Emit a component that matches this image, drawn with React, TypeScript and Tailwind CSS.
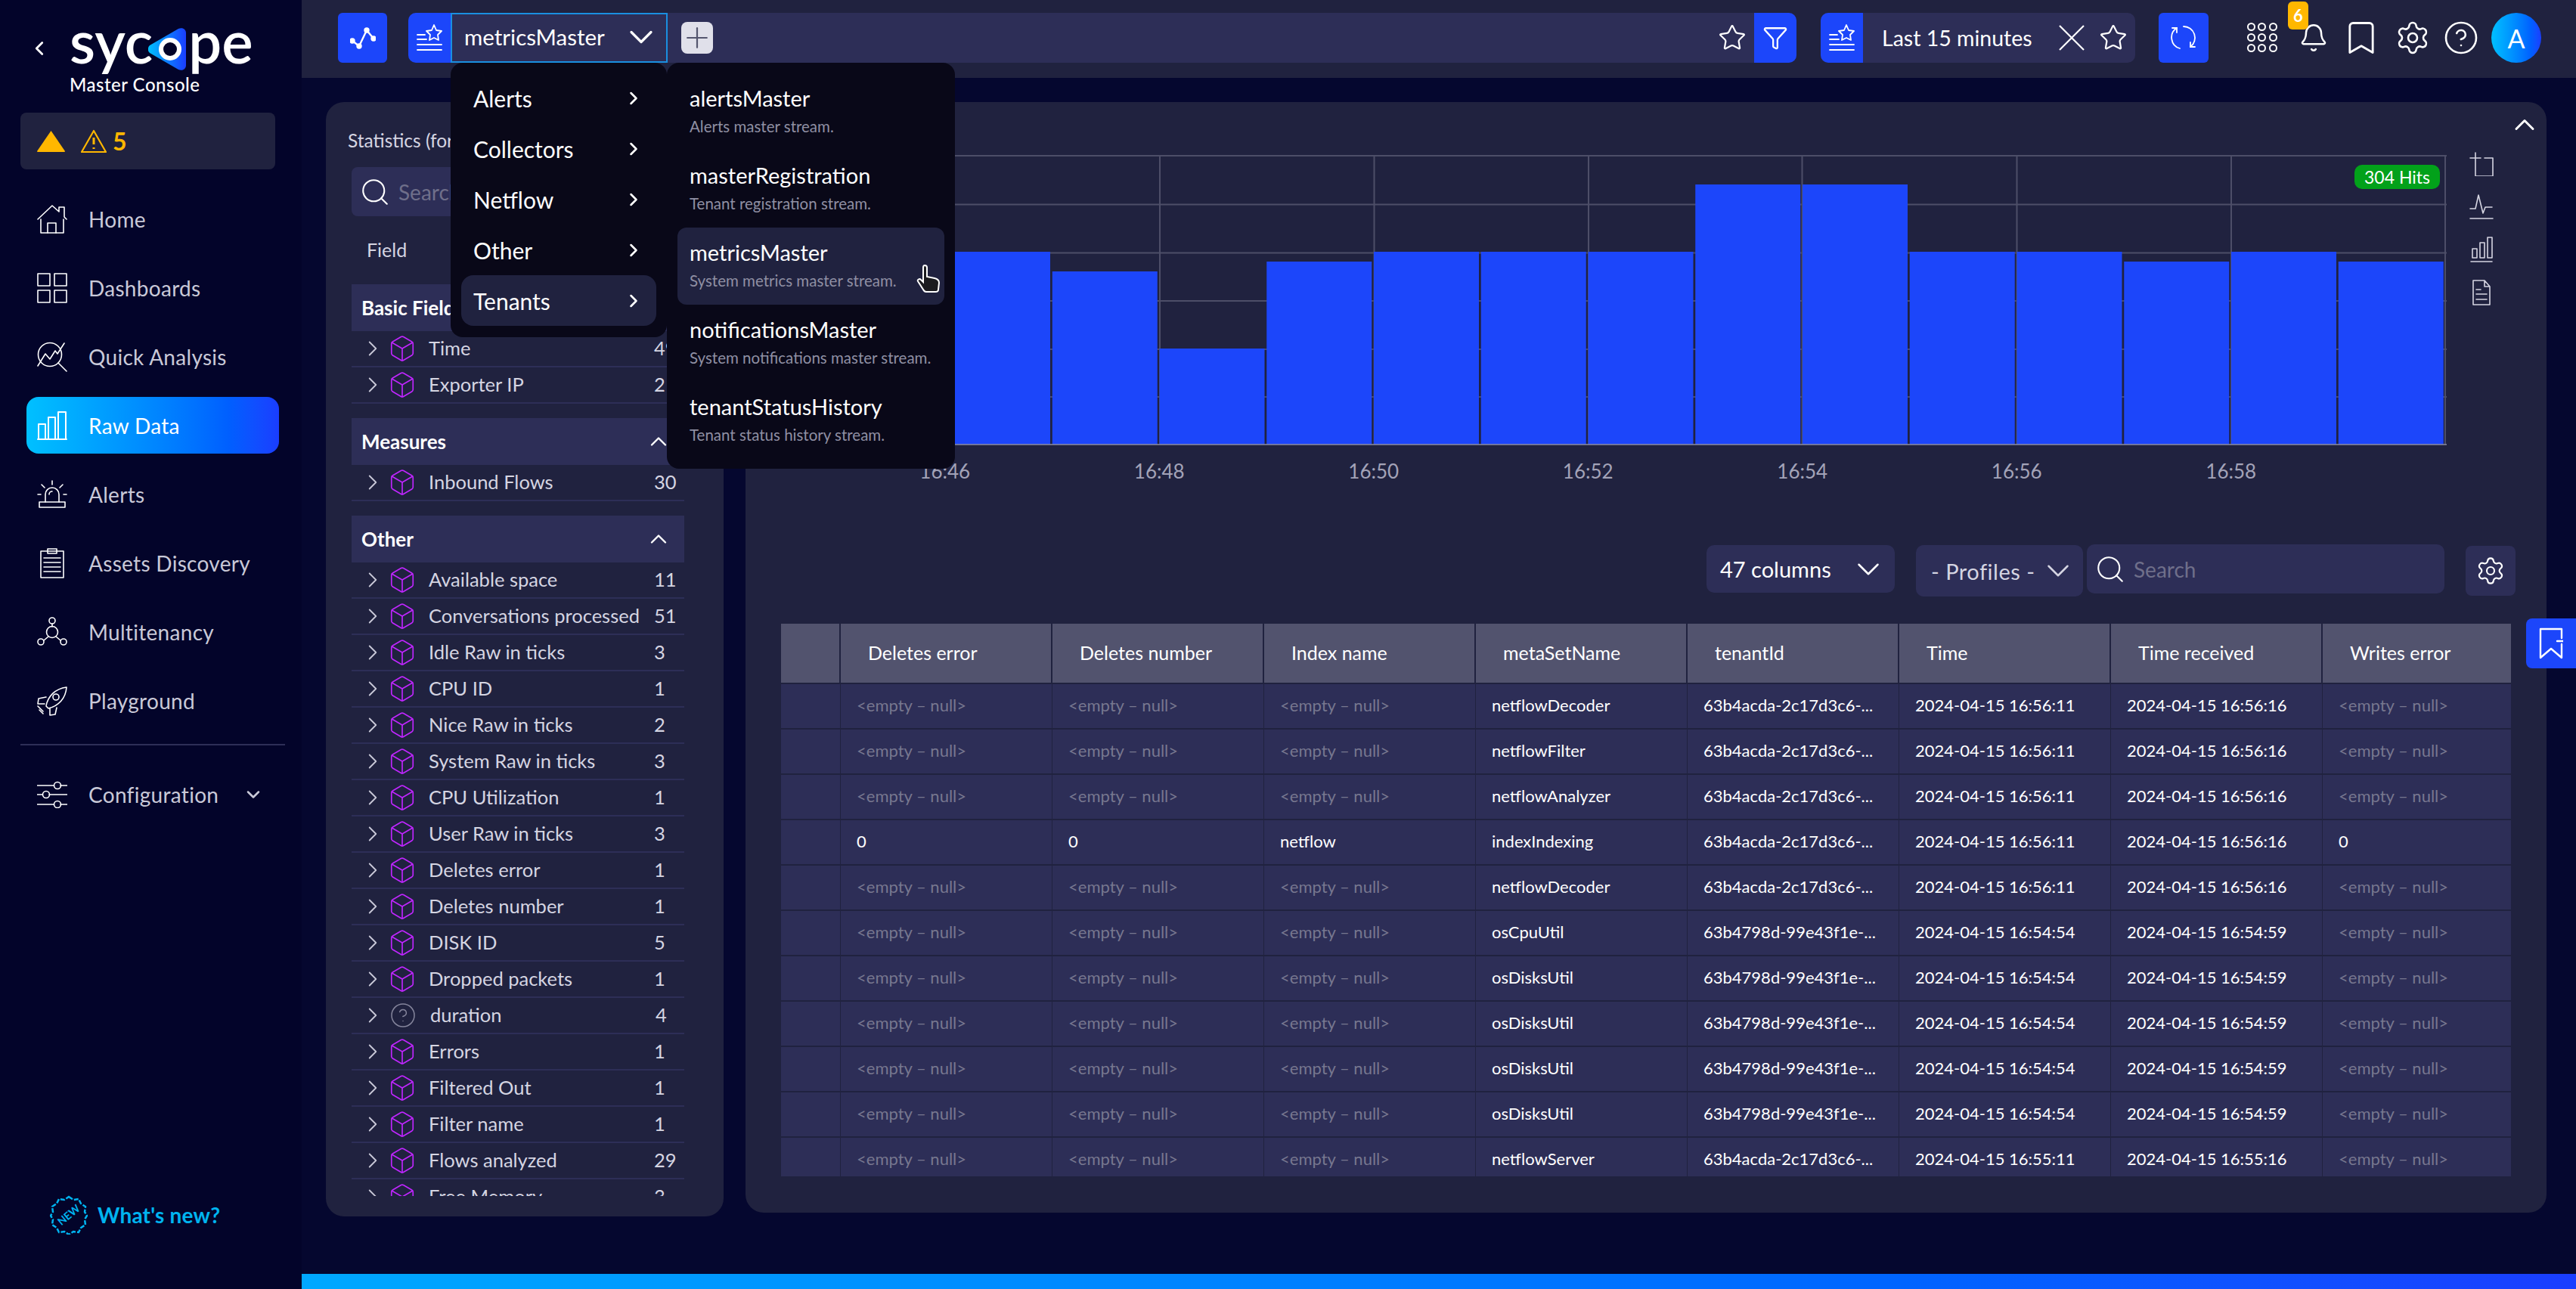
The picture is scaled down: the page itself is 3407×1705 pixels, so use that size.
import React from "react";
import { Box, ChevronRight, ChevronDown, ChevronUp, ChevronLeft, Search, Star, Filter, Plus, Bell, Bookmark, Settings, CircleHelp } from "lucide-react";

const S = { fill: "none", stroke: "currentColor", strokeWidth: 1.6, strokeLinecap: "round", strokeLinejoin: "round" } as const;

function HomeI() { return <svg width="40" height="40" viewBox="0 0 40 40" {...S}><path d="M1 20 20 2l9 8V4h7v13l3 3" /><path d="M5 20v18h30V20" /><path d="M14 38V25h11v13" /></svg>; }
function DashI() { return <svg width="40" height="40" viewBox="0 0 40 40" {...S}><rect x="1" y="1" width="16" height="16" /><rect x="23" y="1" width="16" height="16" /><rect x="1" y="23" width="16" height="16" /><rect x="23" y="23" width="16" height="16" /></svg>; }
function QuickI() { return <svg width="40" height="40" viewBox="0 0 40 40" {...S}><circle cx="17" cy="17" r="15.5" /><path d="m28 28 11 11" /><path d="M1 32 11 16l6 7 7-11 3 4L36 2" /></svg>; }
function BarsI() { return <svg width="40" height="40" viewBox="0 0 40 40" {...S} strokeWidth={2}><path d="M1 38h38" /><rect x="2" y="18" width="9" height="20" /><rect x="15" y="9" width="9" height="29" /><rect x="28" y="2" width="10" height="36" /></svg>; }
function SirenI() { return <svg width="40" height="40" viewBox="0 0 40 40" {...S}><path d="M11 30V20a9 9 0 0 1 18 0v10" /><path d="M16 20a4 4 0 0 1 4-4" /><path d="M3 30h34v7H3z" /><path d="M20 2v5M6 7l4 4M34 7l-4 4M1 20h4M35 20h4" /></svg>; }
function ClipI() { return <svg width="32" height="40" viewBox="0 0 32 40" {...S}><rect x="1" y="4" width="30" height="35" /><rect x="10" y="1" width="12" height="6" /><path d="M5 13h22M5 19h22M5 25h22M5 31h22" /></svg>; }
function MultiI() { return <svg width="40" height="40" viewBox="0 0 40 40" {...S}><circle cx="20" cy="20" r="7.5" /><circle cx="20" cy="5" r="4" /><circle cx="5" cy="33" r="4" /><circle cx="35" cy="33" r="4" /><path d="M20 9v4M9 31l6-5M31 31l-6-5" /></svg>; }
function RocketI() { return <svg width="40" height="40" viewBox="0 0 40 40" {...S}><path d="M12 27C14 14 24 4 39 2c-1 15-11 25-24 28z" /><circle cx="25" cy="15" r="4" /><path d="M12 15 2 17l-1 7 9 0M26 29l-2 9-7 1 0-9" /><path d="m3 32 5 5M1 27l7 7" /></svg>; }
function SlidersI() { return <svg width="40" height="36" viewBox="0 0 40 36" {...S}><path d="M0 6h22M31 6h9M0 18h7M16 18h24M0 31h22M31 31h9" /><circle cx="27" cy="6" r="4.5" /><circle cx="12" cy="18" r="4.5" /><circle cx="27" cy="31" r="4.5" /></svg>; }
function StreamI() { return <svg width="34" height="36" viewBox="0 0 34 36" {...S} strokeWidth={1.8}><path d="M1 27h32M1 34h32M1 20h12M1 14h10" /><path d="m23 1 3 7 7 1-5 5 1 7-6-3-6 3 1-7-5-5 7-1z" /></svg>; }

const nav = [
  { t: "Home", i: <HomeI /> }, { t: "Dashboards", i: <DashI /> }, { t: "Quick Analysis", i: <QuickI /> }, { t: "Raw Data", i: <BarsI />, a: true },
  { t: "Alerts", i: <SirenI /> }, { t: "Assets Discovery", i: <ClipI /> }, { t: "Multitenancy", i: <MultiI /> }, { t: "Playground", i: <RocketI /> },
];

function Sidebar() {
  return (
    <aside className="w-[399px] shrink-0 bg-[#03042a] flex flex-col">
      <div className="h-[149px] flex pl-[37px] pt-[21px] text-white">
        <ChevronLeft size={30} strokeWidth={2.2} className="mt-[28px] mr-[25px] text-white shrink-0" />
        <div className="flex flex-col">
          <div className="flex items-start h-[66px]">
            <span className="text-[78px] leading-[66px] font-semibold">syc</span>
            <svg width="52" height="58" viewBox="0 0 52 58" className="mt-[15px] ml-[-6px] mr-[1px] shrink-0">
              <defs><linearGradient id="lg" x1="0" x2="1" y1="0.5" y2="0.5"><stop offset="0" stopColor="#00c0ff" /><stop offset="1" stopColor="#1a3dff" /></linearGradient></defs>
              <path d="M2 24 40 2c5-2 10 0 10 6v42c0 6-5 8-10 6L2 34c-3-3-3-7 0-10z" fill="url(#lg)" />
              <circle cx="29" cy="29" r="15" fill="#fff" /><circle cx="29" cy="29" r="9" fill="#03042a" />
            </svg>
            <span className="text-[78px] leading-[66px] font-semibold">pe</span>
          </div>
          <span className="text-[24px] leading-[30px] mt-[10px] tracking-[0.5px] font-medium">Master Console</span>
        </div>
      </div>
      <div className="mx-[27px] w-[337px] h-[75px] rounded-[8px] bg-[#20223f] flex items-center pl-[22px] text-[#ffb700] shrink-0">
        <svg width="37" height="28" viewBox="0 0 37 28"><path d="M18.5 0 37 27a1 1 0 0 1-1 1H1a1 1 0 0 1-1-1z" fill="#ffb700" /></svg>
        <svg width="34" height="32" viewBox="0 0 34 32" fill="none" stroke="#ffb700" strokeWidth="2.2" strokeLinejoin="round" className="ml-[21px]"><path d="M17 2 33 30H1z" /><path d="M17 11v9M17 24v2" strokeWidth="3" /></svg>
        <span className="ml-[8px] text-[32px] font-bold leading-none">5</span>
      </div>
      <nav className="mt-[28px] flex flex-col gap-[16px]">
        {nav.map((n) => (
          <div key={n.t} className={"ml-[35px] w-[334px] h-[75px] rounded-[16px] flex items-center pl-[14px] " + (n.a ? "bg-gradient-to-r from-[#00c0ff] to-[#1a3dff] text-white" : "text-[#c9c9d8]")}>
            <span className="w-[40px] flex justify-center text-white shrink-0">{n.i}</span>
            <span className="ml-[28px] text-[28px] leading-none tracking-[0.3px]">{n.t}</span>
          </div>
        ))}
      </nav>
      <div className="mx-[27px] w-[350px] h-[2px] bg-[#2d2e57] mt-[20px]" />
      <div className="ml-[35px] mt-[27px] h-[75px] flex items-center pl-[14px] text-[#c9c9d8]">
        <span className="w-[40px] text-white flex justify-center"><SlidersI /></span>
        <span className="ml-[28px] text-[28px] leading-none tracking-[0.3px]">Configuration</span>
        <ChevronDown size={28} strokeWidth={2.2} className="ml-[32px]" />
      </div>
      <div className="mt-auto mb-[72px] ml-[66px] flex items-center gap-[13px]">
        <svg width="50" height="52" viewBox="0 0 50 52" fill="none" stroke="#00b4f0" strokeWidth="2.5">
          <path d="M25 2l6 4 7-1 3 6 6 4-1 7 3 5-3 5 1 7-6 4-3 6-7-1-6 4-6-4-7 1-3-6-6-4 1-7-3-5 3-5-1-7 6-4 3-6 7 1z" strokeDasharray="6 2" />
          <text x="25" y="31" fontSize="14" fontWeight="700" fill="#00b4f0" stroke="none" textAnchor="middle" transform="rotate(-40 25 26)" fontFamily="Lato">NEW</text>
        </svg>
        <span className="text-[28px] font-bold text-[#00b4f0] leading-none tracking-[0.2px]">What's new?</span>
      </div>
    </aside>
  );
}

function TopBar() {
  return (
    <header className="h-[103px] bg-[#20223f] flex items-start pt-[17px] pl-[48px] text-white shrink-0">
      <div className="w-[65px] h-[66px] rounded-[6px] bg-[#1c46fa] flex items-center justify-center">
        <svg width="34" height="30" viewBox="0 0 34 30" fill="none" stroke="#fff" strokeWidth="2.4"><path d="M3 19 12 26 22 5 31 16" /><circle cx="3" cy="19" r="2.5" fill="#fff" /><circle cx="12" cy="26" r="2.5" fill="#fff" /><circle cx="22" cy="5" r="2.5" fill="#fff" /><circle cx="31" cy="16" r="2.5" fill="#fff" /></svg>
      </div>
      <div className="ml-[28px] w-[1836px] h-[66px] rounded-[10px] bg-[#2d2e57] flex items-center overflow-hidden">
        <div className="w-[56px] h-full bg-[#1c46fa] flex items-center justify-center"><StreamI /></div>
        <div className="w-[287px] h-full border-2 border-[#1a8fe0] flex items-center pl-[16px] pr-[7px] justify-between pb-[3px]">
          <span className="text-[29.5px] leading-none">metricsMaster</span>
          <ChevronDown size={52} strokeWidth={1.5} />
        </div>
        <div className="ml-[18px] w-[42px] h-[42px] rounded-[8px] bg-[#e0e0ea] flex items-center justify-center text-[#55566f]"><Plus size={44} strokeWidth={1.2} className="shrink-0" /></div>
        <Star size={38} strokeWidth={1.4} className="ml-auto mr-[10px]" />
        <div className="w-[56px] h-full bg-[#1c46fa] flex items-center justify-center"><Filter size={34} strokeWidth={1.6} /></div>
      </div>
      <div className="ml-[32px] w-[416px] h-[66px] rounded-[10px] bg-[#2d2e57] flex items-center overflow-hidden">
        <div className="w-[56px] h-full bg-[#1c46fa] flex items-center justify-center"><StreamI /></div>
        <span className="ml-[25px] text-[28.5px] leading-none">Last 15 minutes</span>
        <svg width="34" height="34" viewBox="0 0 34 34" fill="none" stroke="#fff" strokeWidth="2.2" className="ml-[35px]"><path d="M1 1 33 33M33 1 1 33" /></svg>
        <Star size={38} strokeWidth={1.4} className="ml-[19px]" />
      </div>
      <div className="ml-[31px] w-[66px] h-[66px] rounded-[6px] bg-[#1c46fa] flex items-center justify-center">
        <svg width="34" height="34" viewBox="0 0 34 34" fill="none" stroke="#fff" strokeWidth="1.8" strokeLinecap="round"><path d="M8 4A15 15 0 0 0 12 31" /><path d="M2 4h6v6" /><path d="M17 2a15 15 0 0 1 9 27" /><path d="M32 29h-6v-6" /></svg>
      </div>
      <div className="ml-[51px] mt-[13px] w-[40px] grid grid-cols-3 gap-x-[3px] gap-y-[3px]">
        {Array.from({ length: 9 }).map((_, i) => <span key={i} className="w-[11px] h-[11px] rounded-full border-2 border-white" />)}
      </div>
      <div className="relative ml-[28px] mt-[13px]">
        <Bell size={40} strokeWidth={1.5} />
        <span className="absolute left-[-14px] top-[-28px] w-[27px] h-[37px] rounded-[6px] bg-[#ffb700] text-white text-[22px] font-bold flex items-center justify-center">6</span>
      </div>
      <Bookmark size={52} strokeWidth={1.3} className="ml-[17px] mt-[7px]" />
      <Settings size={48} strokeWidth={1.3} className="ml-[18px] mt-[9px]" />
      <CircleHelp size={48} strokeWidth={1.3} className="ml-[16px] mt-[9px]" />
      <div className="ml-[16px] w-[66px] h-[66px] rounded-full bg-gradient-to-r from-[#00c0ff] to-[#1a3dff] flex items-center justify-center text-[34px]">A</div>
    </header>
  );
}

const Row = ({ name, n, q }: { name: string; n: string; q?: boolean }) => (
  <div className="h-[48px] border-b-2 border-[#2d2e57] flex items-center text-[#d5d5e2] text-[25.5px] shrink-0">
    <ChevronRight size={34} strokeWidth={1.3} className="ml-[11px] text-[#c9c9d8] shrink-0" />
    {q ? <CircleHelp size={36} strokeWidth={1} className="ml-[5px] mr-[2px] text-[#85859c] shrink-0" /> : <Box size={38} strokeWidth={1.05} className="ml-[3px] text-[#c026ff] shrink-0" />}
    <span className="ml-[16px] w-[298px] whitespace-nowrap leading-none">{name}</span>
    <span className="leading-none">{n}</span>
  </div>
);
const GroupHead = ({ t }: { t: string }) => (
  <div className="h-[62px] bg-[#2d2e57] flex items-center justify-between pl-[13px] pr-[16px] shrink-0">
    <span className="text-[26px] font-bold text-white leading-none">{t}</span>
    <ChevronUp size={36} strokeWidth={1.6} className="text-white" />
  </div>
);

const other: [string, string][] = [["Available space", "11"], ["Conversations processed", "51"], ["Idle Raw in ticks", "3"], ["CPU ID", "1"], ["Nice Raw in ticks", "2"], ["System Raw in ticks", "3"], ["CPU Utilization", "1"], ["User Raw in ticks", "3"], ["Deletes error", "1"], ["Deletes number", "1"], ["DISK ID", "5"], ["Dropped packets", "1"], ["duration", "4"], ["Errors", "1"], ["Filtered Out", "1"], ["Filter name", "1"], ["Flows analyzed", "29"], ["Free Memory", "3"]];

function Stats() {
  return (
    <section className="ml-[32px] w-[526px] h-[1474px] rounded-[24px] bg-[#20223f] pl-[34px] shrink-0 overflow-hidden">
      <div className="h-[86px] pt-[36px] -ml-[5px] text-[24.5px] text-[#d5d5e2] leading-[30px] whitespace-nowrap">Statistics (for 304 hits)</div>
      <div className="w-[440px] h-[65px] rounded-[8px] bg-[#2d2e57] flex items-center pl-[10px]">
        <Search size={42} strokeWidth={1.2} className="text-white" />
        <span className="ml-[10px] text-[28px] text-[#6f6f8a] leading-none">Search</span>
      </div>
      <div className="h-[90px] flex items-center pl-[20px] text-[25px] text-[#d5d5e2]">Field</div>
      <div className="w-[440px] h-[1206px] overflow-hidden flex flex-col">
        <GroupHead t="Basic Fields" />
        <Row name="Time" n="49" />
        <Row name="Exporter IP" n="2" />
        <div className="h-[19px] shrink-0" />
        <GroupHead t="Measures" />
        <Row name="Inbound Flows" n="30" />
        <div className="h-[19px] shrink-0" />
        <GroupHead t="Other" />
        {other.map(([a, b]) => <Row key={a} name={a} n={b} q={a === "duration"} />)}
      </div>
    </section>
  );
}

const tops = [346, 333, 359, 461, 346, 333, 333, 333, 244, 244, 333, 333, 346, 333, 346];
const hl = [0, 64.5, 128.5, 192, 256, 319];
const vl = [240.5, 524, 807.5, 1091, 1373.5, 1657.5, 1941, 2224];
const labels = ["16:46", "16:48", "16:50", "16:52", "16:54", "16:56", "16:58"];

function Chart() {
  return (
    <div className="w-[2226px] mt-[50px] shrink-0">
      <div className="relative">
        <svg width="2226" height="385" className="block">
          {hl.map((y) => <line key={y} x1="0" x2="2226" y1={y + 1} y2={y + 1} stroke="#4d4e68" strokeWidth="2" />)}
          {vl.map((x) => <line key={x} x1={x} x2={x} y1="0" y2="383" stroke="#4d4e68" strokeWidth="2" />)}
          {tops.map((t, i) => <rect key={i} x={98.25 + 141.75 * i} y={t - 205} width="139" height={588 - t} fill="#1c46fa" />)}
          <line x1="0" x2="2226" y1="383" y2="383" stroke="#8b8ca0" strokeWidth="1.5" />
        </svg>
        <span className="absolute right-[9px] top-[13px] w-[113px] h-[32px] rounded-[10px] bg-[#02a11a] text-white text-[23px] leading-none flex items-center justify-center">304 Hits</span>
      </div>
      <div className="flex ml-[98px] mt-[16px] text-[#a3a3b8] text-[26px] leading-[34px]">
        {labels.map((l) => <span key={l} className="w-[283.5px] text-center">{l}</span>)}
      </div>
    </div>
  );
}

const cols = ["Deletes error", "Deletes number", "Index name", "metaSetName", "tenantId", "Time", "Time received", "Writes error"];
const E = "<empty – null>";
const A = "63b4acda-2c17d3c6-...";
const B = "63b4798d-99e43f1e-...";
const rows = [
  [E, E, E, "netflowDecoder", A, "2024-04-15 16:56:11", "2024-04-15 16:56:16", E],
  [E, E, E, "netflowFilter", A, "2024-04-15 16:56:11", "2024-04-15 16:56:16", E],
  [E, E, E, "netflowAnalyzer", A, "2024-04-15 16:56:11", "2024-04-15 16:56:16", E],
  ["0", "0", "netflow", "indexIndexing", A, "2024-04-15 16:56:11", "2024-04-15 16:56:16", "0"],
  [E, E, E, "netflowDecoder", A, "2024-04-15 16:56:11", "2024-04-15 16:56:16", E],
  [E, E, E, "osCpuUtil", B, "2024-04-15 16:54:54", "2024-04-15 16:54:59", E],
  [E, E, E, "osDisksUtil", B, "2024-04-15 16:54:54", "2024-04-15 16:54:59", E],
  [E, E, E, "osDisksUtil", B, "2024-04-15 16:54:54", "2024-04-15 16:54:59", E],
  [E, E, E, "osDisksUtil", B, "2024-04-15 16:54:54", "2024-04-15 16:54:59", E],
  [E, E, E, "osDisksUtil", B, "2024-04-15 16:54:54", "2024-04-15 16:54:59", E],
  [E, E, E, "netflowServer", A, "2024-04-15 16:55:11", "2024-04-15 16:55:16", E],
];

function Table() {
  return (
    <div className="ml-[47px] w-[2288px] h-[731px] overflow-hidden mt-[36px]">
      <div className="flex h-[78px] bg-[#52536e] text-white text-[25px]">
        <div className="w-[79px] border-r-2 border-[#20223f] shrink-0" />
        {cols.map((c, i) => <div key={c} className={"h-full flex items-center pl-[36px] pb-[2px] shrink-0 leading-none " + (i === 7 ? "w-[249px]" : "w-[280px] border-r-2 border-[#20223f]")}>{c}</div>)}
      </div>
      {rows.map((r, ri) => (
        <div key={ri} className="flex h-[60px] border-t-2 border-[#20223f] bg-[#2d2e57] text-[22px]">
          <div className="w-[79px] border-r border-[#20223f] shrink-0" />
          {r.map((v, i) => <div key={i} className={"h-full flex items-center pl-[21px] pb-[2px] shrink-0 leading-none whitespace-nowrap " + (v === E ? "text-[#77778f] " : "text-white ") + (i === 7 ? "w-[249px]" : "w-[280px] border-r border-[#20223f]")}>{v}</div>)}
        </div>
      ))}
    </div>
  );
}

function DocI() { return <svg width="24" height="34" viewBox="0 0 24 34" {...S}><path d="M1 1h15l7 8v24H1zM16 1v8h7M5 13h6M5 19h14M5 26h14" /></svg>; }

function MainPanel() {
  return (
    <section className="relative ml-[29px] w-[2382px] h-[1469px] rounded-[24px] bg-[#20223f] shrink-0 pt-[20px] pl-[24px] text-white">
      <div className="flex">
        <Chart />
        <div className="ml-[30px] mt-[46px] w-[32px] flex flex-col gap-[23px] items-center text-[#d5d5e2] shrink-0">
          <svg width="32" height="32" viewBox="0 0 32 32" {...S}><path d="M1 8h14M8 1v31M8 32h23V8H20" /></svg>
          <svg width="32" height="34" viewBox="0 0 32 34" {...S}><path d="M1 20h7l4-18 6 24 3-8h9M1 33h30" /></svg>
          <svg width="30" height="34" viewBox="0 0 30 34" {...S}><path d="M1 33h28M3 28V16h6v12zM13 28V8h6v20zM23 28V1h6v27z" /></svg>
          <DocI />
        </div>
        <ChevronUp size={44} strokeWidth={1.6} className="ml-[19px] -mt-[12px] shrink-0" />
      </div>
      <div className="mt-[81px] flex items-start pr-[40px]">
        <div className="ml-[1247px] w-[249px] h-[63px] rounded-[10px] bg-[#2d2e57] flex items-center pl-[18px] pr-[10px] justify-between text-[29px] shrink-0">
          <span className="leading-none">47 columns</span><ChevronDown size={50} strokeWidth={1.2} />
        </div>
        <div className="ml-[28px] w-[221px] h-[68px] rounded-[10px] bg-[#2d2e57] flex items-center pl-[20px] pr-[8px] justify-between text-[29px] shrink-0 text-[#d5d5e2]">
          <span className="leading-none tracking-[0.5px] whitespace-nowrap">- Profiles -</span><ChevronDown size={50} strokeWidth={1.2} className="shrink-0" />
        </div>
        <div className="ml-[5px] -mt-[1px] w-[473px] h-[65px] rounded-[10px] bg-[#2d2e57] flex items-center pl-[10px] shrink-0">
          <Search size={42} strokeWidth={1.2} /><span className="ml-[10px] text-[28px] text-[#6f6f8a] leading-none">Search</span>
        </div>
        <div className="ml-[28px] mt-[1px] w-[66px] h-[66px] rounded-[8px] bg-[#2d2e57] flex items-center justify-center shrink-0"><Settings size={40} strokeWidth={1.3} /></div>
      </div>
      <div className="-ml-[24px]"><Table /></div>
      <div className="absolute left-[2355px] top-[683px] w-[66px] h-[66px] rounded-l-[8px] bg-[#1c46fa] flex items-center justify-center">
        <svg width="32" height="42" viewBox="0 0 32 42" {...S} strokeWidth={2.4}><path d="M30 14V2H2v38l14-12 14 12V22M24 18h8" /></svg>
      </div>
    </section>
  );
}

function Menus() {
  const a = ["Alerts", "Collectors", "Netflow", "Other", "Tenants"];
  const b = [["alertsMaster", "Alerts master stream."], ["masterRegistration", "Tenant registration stream."], ["metricsMaster", "System metrics master stream."], ["notificationsMaster", "System notifications master stream."], ["tenantStatusHistory", "Tenant status history stream."]];
  return (
    <div className="absolute left-[596px] top-[83px] flex items-start text-white z-20">
      <div className="w-[286px] h-[363px] rounded-[16px] bg-[#090818] px-[14px] pt-[13px] flex flex-col">
        {a.map((t) => (
          <div key={t} className={"h-[67px] rounded-[16px] flex items-center justify-between pl-[16px] pr-[16px] shrink-0 " + (t === "Tenants" ? "bg-[#20223f]" : "")}>
            <span className="text-[30px] leading-none">{t}</span><ChevronRight size={28} strokeWidth={2.2} />
          </div>
        ))}
      </div>
      <div className="w-[381px] h-[537px] rounded-[16px] bg-[#090818] px-[14px] pt-[14px] flex flex-col">
        {b.map(([t, d]) => (
          <div key={t} className={"relative h-[102px] rounded-[12px] pl-[16px] pt-[15px] shrink-0 " + (t === "metricsMaster" ? "bg-[#20223f]" : "")}>
            <div className="text-[29px] leading-[36px] whitespace-nowrap">{t}</div>
            <div className="text-[20.5px] leading-[26px] mt-[6px] text-[#8f8fa3] whitespace-nowrap">{d}</div>
            {t === "metricsMaster" && (
              <svg width="34" height="38" viewBox="0 0 34 38" className="absolute left-[316px] top-[48px]"><path d="M11 2c2 0 3 1 3 3v12l10 2c4 1 6 3 6 6l-1 9c0 2-2 3-4 3H13c-2 0-3-1-4-3L2 23c-1-2 2-4 4-2l3 3V5c0-2 1-3 2-3z" fill="#1b1b1f" stroke="#fff" strokeWidth="2" /></svg>
            )}
          </div>
        ))}
      </div>
    </div>
  );
}

export default function App() {
  return (
    <div className="relative w-[3407px] h-[1705px] overflow-hidden flex bg-[#05072f] font-[Lato,sans-serif]">
      <Sidebar />
      <div className="w-[3008px] flex flex-col">
        <TopBar />
        <div className="flex mt-[32px] flex-1 items-start">
          <Stats />
          <MainPanel />
        </div>
        <div className="h-[20px] bg-gradient-to-r from-[#00a8ff] to-[#1a3dff] shrink-0" />
      </div>
      <Menus />
    </div>
  );
}
